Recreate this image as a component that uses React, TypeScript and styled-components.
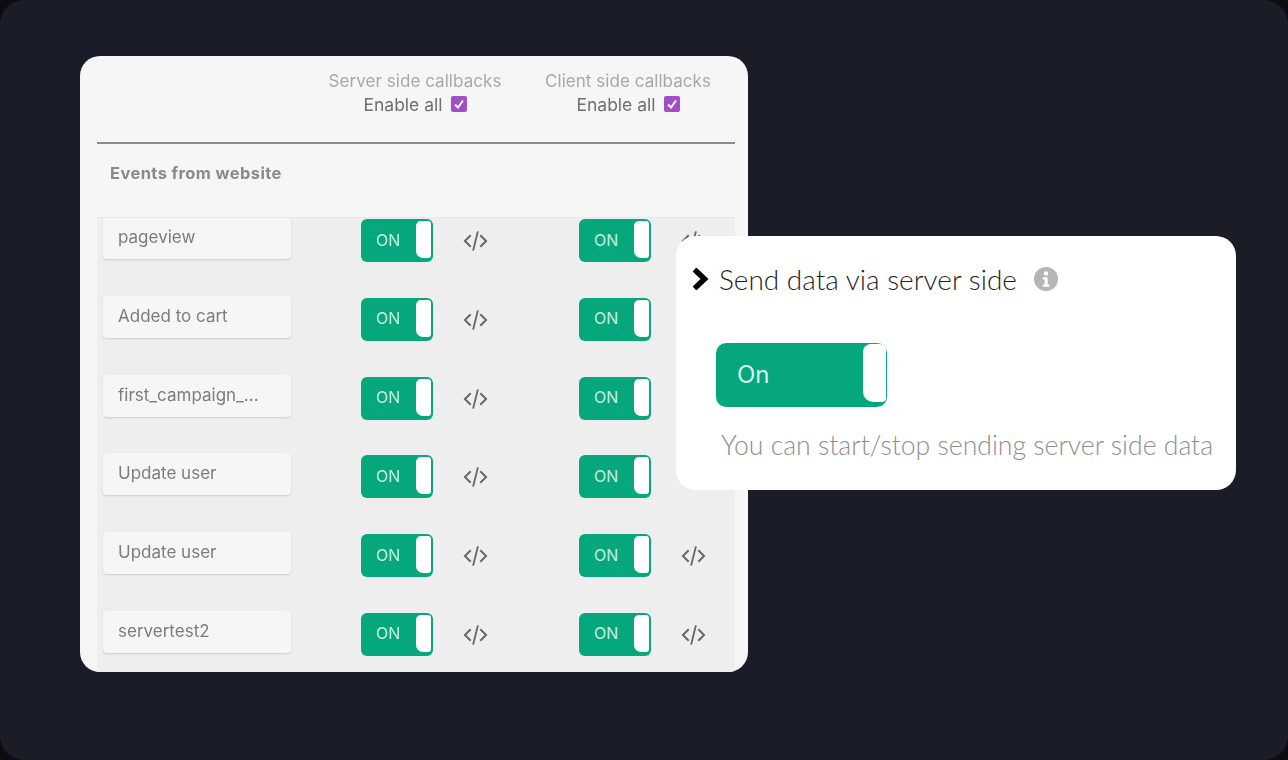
import React from 'react';
import styled, {createGlobalStyle} from 'styled-components';

const GlobalStyle = createGlobalStyle`
    html, body {
        margin: 0;
        padding: 0;
        background: #0b0c11;
    }
`;

const Frame = styled.div`
    position: relative;
    box-sizing: border-box;
    width: 1288px;
    height: 760px;
    padding: 56px 0 0 80px;
    background: #1a1d28;
    border-radius: 24px;
    overflow: hidden;
`;

const Card = styled.div`
    display: flex;
    flex-direction: column;
    box-sizing: border-box;
    width: 668px;
    height: 616px;
    padding: 0 13px 0 17px;
    background: #f6f6f6;
    border-radius: 20px;
    overflow: hidden;
    font-family: 'Inter', 'Open Sans', sans-serif;
`;

const Head = styled.div`
    display: grid;
    grid-template-columns: 209px 218px 208px;
    height: 88px;
    border-bottom: 2px solid #8b8b8b;
    box-sizing: border-box;
    filter: blur(0.4px);
`;

const HeadColumn = styled.div<{$shift: number}>`
    display: flex;
    flex-direction: column;
    align-items: center;
    grid-column: ${p => p.$shift};
    padding-top: 15px;
`;

const ColumnTitle = styled.div`
    font-size: 17px;
    letter-spacing: 0.05px;
    line-height: 20px;
    color: #a8a8a8;
    white-space: nowrap;
`;

const EnableAll = styled.label`
    display: flex;
    align-items: center;
    gap: 8px;
    margin-top: 4px;
    font-size: 17.5px;
    line-height: 20px;
    color: #6f6f6f;
    white-space: nowrap;
`;

const Check = styled.span`
    display: inline-flex;
    align-items: center;
    justify-content: center;
    width: 16px;
    height: 16px;
    margin-top: -3px;
    border-radius: 2px;
    background: #a24fc7;
`;

const SectionTitle = styled.div`
    height: 74px;
    padding: 19px 0 0 13px;
    box-sizing: border-box;
    font-size: 16.5px;
    font-weight: 700;
    letter-spacing: 0.4px;
    line-height: 20px;
    color: #8a8a8a;
    border-bottom: 1px solid #e8e8e8;
    filter: blur(0.4px);
`;

const Rows = styled.div`
    flex: 1;
    display: grid;
    grid-auto-rows: 78.8px;
    padding-left: 6px;
    background: #eeeeee;
    overflow: hidden;
`;

const Row = styled.div`
    display: grid;
    grid-template-columns: 188px 70px 72px 30px 25px 91px 72px 30px 25px;
    align-items: start;
    filter: blur(0.4px);
`;

const NameBox = styled.div`
    grid-column: 1;
    box-sizing: border-box;
    height: 42px;
    margin-top: -1px;
    padding: 10px 0 0 15px;
    background: #f6f6f6;
    border-radius: 4px;
    box-shadow: 0 1px 2px rgba(0, 0, 0, 0.14);
    font-size: 17px;
    line-height: 20px;
    color: #7c7c7c;
    white-space: nowrap;
`;

const SmallToggle = styled.div<{$column: number}>`
    grid-column: ${p => p.$column};
    display: flex;
    align-items: center;
    justify-content: space-between;
    box-sizing: border-box;
    height: 43px;
    margin-top: 1px;
    padding: 2px 2px 4px 15px;
    background: #06a77d;
    border-radius: 6px;
    font-size: 16px;
    color: #c6efe2;
`;

const SmallKnob = styled.span`
    align-self: stretch;
    width: 15px;
    background: #ffffff;
    border-radius: 5px 3px 3px 7px;
`;

const CodeSlot = styled.span<{$column: number}>`
    grid-column: ${p => p.$column};
    display: flex;
    justify-content: center;
    padding-top: 10px;
`;

const Popover = styled.div`
    position: absolute;
    left: 676px;
    top: 236px;
    box-sizing: border-box;
    width: 560px;
    height: 254px;
    padding: 29px 0 0 16px;
    background: #ffffff;
    border-radius: 20px;
    font-family: 'Lato', 'Open Sans', sans-serif;
`;

const PopoverTitle = styled.div`
    display: flex;
    align-items: center;
    height: 28px;
    font-size: 28px;
    font-weight: 300;
    color: #1f1f1f;
    white-space: nowrap;
`;

const TitleText = styled.span`
    margin: 0 17px 0 10px;
`;

const BigToggle = styled.div`
    display: flex;
    align-items: center;
    justify-content: space-between;
    box-sizing: border-box;
    width: 171px;
    height: 64px;
    margin: 50px 0 0 24px;
    padding: 1px 1px 5px 21px;
    background: #06a77d;
    border-radius: 10px;
    font-family: 'Inter', sans-serif;
    font-size: 24px;
    line-height: 30px;
    color: #d9f5ec;
`;

const BigLabel = styled.span`
    padding-top: 4px;
`;

const BigKnob = styled.span`
    align-self: stretch;
    width: 23px;
    background: #ffffff;
    border-radius: 8px 6px 4px 10px;
`;

const Hint = styled.div`
    margin: 22px 0 0 29px;
    font-size: 26.6px;
    font-weight: 300;
    line-height: 32px;
    color: #8f8f8f;
    white-space: nowrap;
`;

const CodeIcon = () => (
    <svg width='26' height='26' viewBox='0 0 26 26' fill='none' stroke='#666666' strokeWidth='2'>
        <path d='M8 7l-6 6 6 6'/>
        <path d='M18 7l6 6-6 6'/>
        <path d='M15.5 3l-5 20'/>
    </svg>
);

const CheckMark = () => (
    <svg width='12' height='12' viewBox='0 0 12 12' fill='none' stroke='#ffffff' strokeWidth='2'>
        <path d='M2 6.5l3 3 5-7'/>
    </svg>
);

const Chevron = () => (
    <svg width='17' height='22' viewBox='0 0 17 22' fill='none' stroke='#000000' strokeWidth='5.5' strokeLinejoin='miter'>
        <path d='M2.5 1.5l10 9.5-10 9.5'/>
    </svg>
);

const InfoIcon = () => (
    <svg width='24' height='24' viewBox='0 0 24 24'>
        <circle cx='12' cy='12' r='12' fill='#b5b5b5'/>
        <circle cx='12' cy='6.5' r='2.3' fill='#ffffff'/>
        <path d='M8.8 10.2h4.8v7.3h1.8v2.2H8.8v-2.2h1.9v-5H8.8z' fill='#ffffff'/>
    </svg>
);

const events = ['pageview', 'Added to cart', 'first_campaign_...', 'Update user', 'Update user', 'servertest2'];

function EventRow({name}: {name: string}) {
    return (
        <Row>
            <NameBox>{name}</NameBox>
            <SmallToggle $column={3}>{'ON'}<SmallKnob/></SmallToggle>
            <CodeSlot $column={5}><CodeIcon/></CodeSlot>
            <SmallToggle $column={7}>{'ON'}<SmallKnob/></SmallToggle>
            <CodeSlot $column={9}><CodeIcon/></CodeSlot>
        </Row>
    );
}

export default function App() {
    return (
        <Frame>
            <GlobalStyle/>
            <Card>
                <Head>
                    <HeadColumn $shift={2}>
                        <ColumnTitle>{'Server side callbacks'}</ColumnTitle>
                        <EnableAll>{'Enable all'}<Check><CheckMark/></Check></EnableAll>
                    </HeadColumn>
                    <HeadColumn $shift={3}>
                        <ColumnTitle>{'Client side callbacks'}</ColumnTitle>
                        <EnableAll>{'Enable all'}<Check><CheckMark/></Check></EnableAll>
                    </HeadColumn>
                </Head>
                <SectionTitle>{'Events from website'}</SectionTitle>
                <Rows>
                    {events.map((name, i) => <EventRow key={i} name={name}/>)}
                </Rows>
            </Card>
            <Popover>
                <PopoverTitle>
                    <Chevron/>
                    <TitleText>{'Send data via server side'}</TitleText>
                    <InfoIcon/>
                </PopoverTitle>
                <BigToggle><BigLabel>{'On'}</BigLabel><BigKnob/></BigToggle>
                <Hint>{'You can start/stop sending server side data'}</Hint>
            </Popover>
        </Frame>
    );
}
